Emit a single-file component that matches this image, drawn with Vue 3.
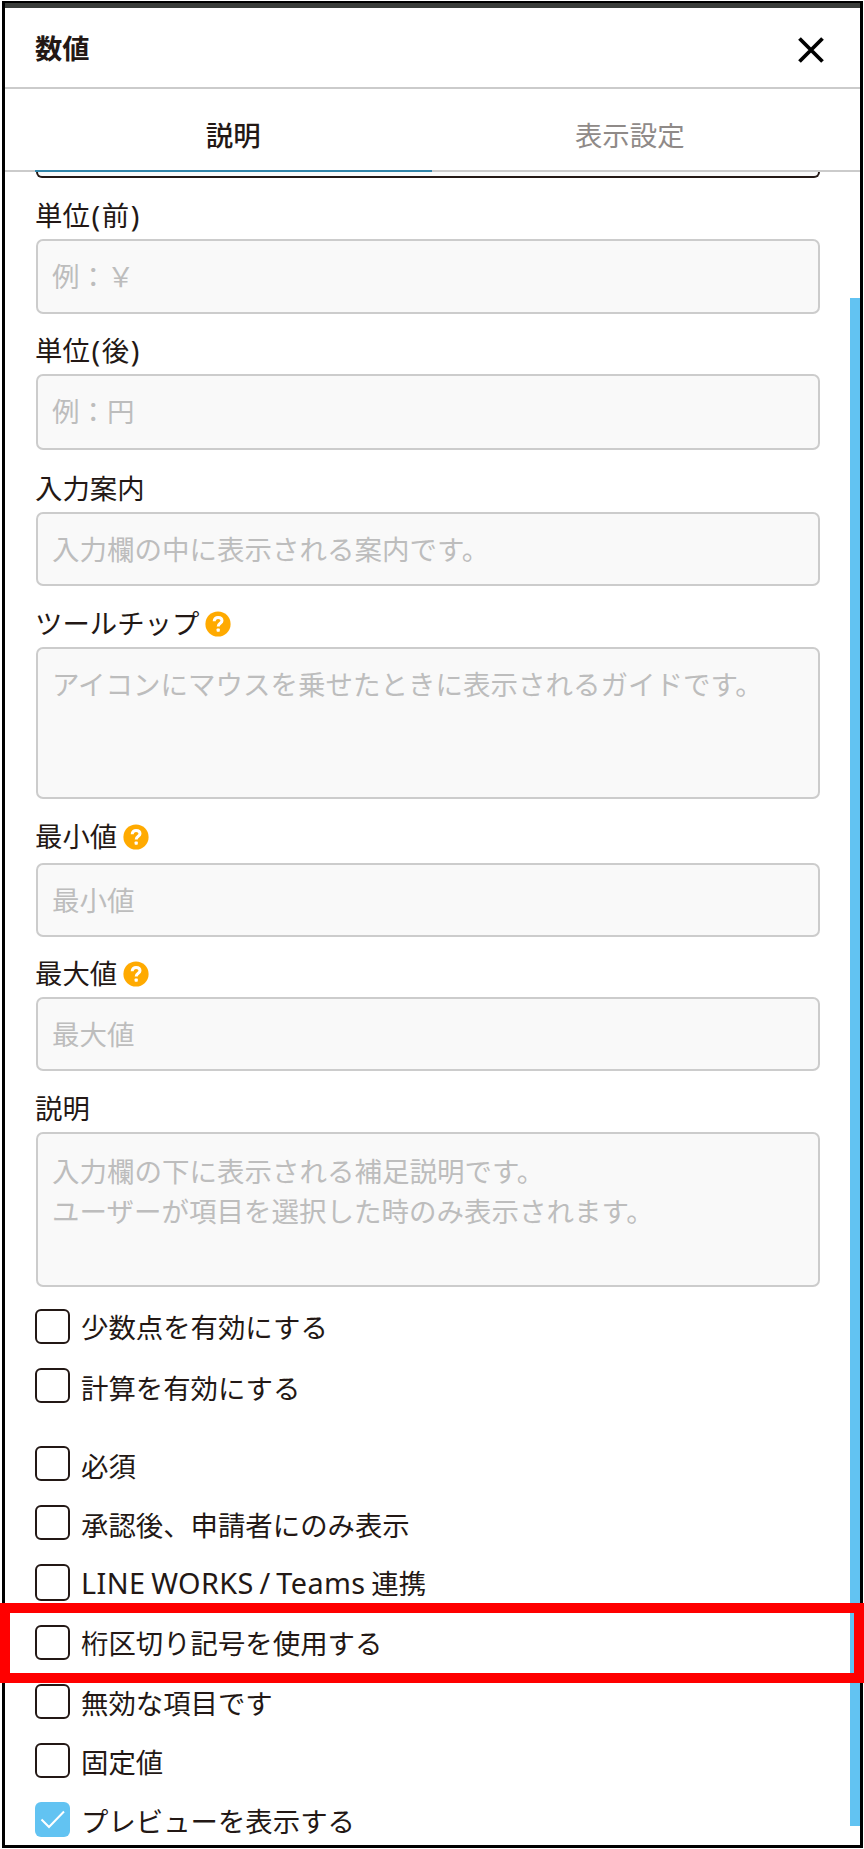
<script setup>
  import { ref } from "vue"

  const tabs = ['説明', '表示設定']
  const activeTab = ref(0)

  // gap: space above the label, height: height of the input box
  const fields = [
    {label: '単位(前)', placeholder: '例：￥', gap: 15, height: 75},
    {label: '単位(後)', placeholder: '例：円', gap: 14, height: 76, raised: true},
    {label: '入力案内', placeholder: '入力欄の中に表示される案内です。', gap: 16, height: 74},
    {label: 'ツールチップ', placeholder: 'アイコンにマウスを乗せたときに表示されるガイドです。', gap: 15, height: 152, multi: true, help: true},
    {label: '最小値', placeholder: '最小値', gap: 15, height: 74, help: true, loose: true},
    {label: '最大値', placeholder: '最大値', gap: 14, height: 74, help: true},
    {label: '説明', placeholder: '入力欄の下に表示される補足説明です。\nユーザーが項目を選択した時のみ表示されます。', gap: 15, height: 155, multi: true, low: true}
  ]

  const checks = ref([
    {label: '少数点を有効にする', on: false, gap: 22, drop: 1},
    {label: '計算を有効にする', on: false, gap: 24, drop: 3},
    {label: '必須', on: false, gap: 43, drop: 3},
    {label: '承認後、申請者にのみ表示', on: false, gap: 24, drop: 3},
    {label: 'LINE WORKS / Teams 連携', on: false, gap: 24, drop: 1, tall: true},
    {label: '桁区切り記号を使用する', on: false, gap: 24, drop: 1},
    {label: '無効な項目です', on: false, gap: 24, drop: 2},
    {label: '固定値', on: false, gap: 24, drop: 2},
    {label: 'プレビューを表示する', on: true, gap: 24, drop: 2}
  ])

  // latin runs and brackets are set a bit wider than the japanese text
  function parts(text) {
    return text.split(/([ -~]+)/).filter(Boolean).map(t => ({
      text: t,
      type: /^[()]$/.test(t) ? 'bracket' : /^[ -~]+$/.test(t) ? 'latin' : ''
    }))
  }
</script>

<template>
  <div class="screen">
    <div class="panel">
      <header class="header">
        <h1 class="header__title">数値</h1>
        <svg class="header__close" viewBox="0 0 28 28">
          <path d="M2.5 2.5L25.5 25.5M25.5 2.5L2.5 25.5" />
        </svg>
      </header>

      <nav class="tabs">
        <div
          v-for="(tab, i) in tabs" :key="tab"
          class="tab" :class="{ 'tab--active': i === activeTab }"
          @click="activeTab = i"
          >
          {{ tab }}
        </div>
      </nav>

      <div class="body">
        <div class="cut"></div>

        <div
          v-for="field in fields" :key="field.label"
          class="field"
          :style="{ marginTop: field.gap + 'px' }"
          >
          <label class="field__label" :class="{ 'field__label--loose': field.loose }">
            <span v-for="(part, i) in parts(field.label)" :key="i" :class="part.type">{{ part.text }}</span>
            <svg v-if="field.help" class="help" viewBox="0 0 26 26">
              <circle cx="13" cy="13" r="12.6" />
              <path d="M9.2 10.2C9.2 7.8 10.9 6.6 13.1 6.6C15.4 6.6 17 7.8 17 9.8C17 12.3 13.2 12.3 13.2 15.4" />
              <rect x="11.6" y="17.5" width="3.2" height="3.2" rx="0.8" />
            </svg>
          </label>
          <textarea
            v-if="field.multi"
            class="field__input field__input--multi"
            :class="{ 'field__input--low': field.low }"
            :style="{ height: field.height + 'px' }"
            :placeholder="field.placeholder"
            ></textarea>
          <input
            v-else
            class="field__input"
            :class="{ 'field__input--raised': field.raised }"
            :style="{ height: field.height + 'px' }"
            :placeholder="field.placeholder"
            >
        </div>

        <div
          v-for="check in checks" :key="check.label"
          class="check"
          :style="{ marginTop: check.gap + 'px' }"
          @click="check.on = !check.on"
          >
          <span class="check__box" :class="{ 'check__box--on': check.on, 'check__box--tall': check.tall }">
            <svg v-if="check.on" class="check__mark" viewBox="0 0 35 35">
              <path d="M6.5 17.5L14 25L29 9.5" />
            </svg>
          </span>
          <span class="check__text" :style="{ paddingTop: check.drop + 'px' }">
            <span v-for="(part, i) in parts(check.label)" :key="i" :class="part.type">{{ part.text }}</span>
          </span>
        </div>

        <div class="scrollbar"></div>
      </div>
    </div>
    <div class="highlight"></div>
  </div>
</template>

<style>
  body {
    background-color: #FFFFFF;
  }
</style>

<style scoped>
  .screen, .screen * {
    box-sizing: border-box;
  }

  .screen {
    position: relative;
    width: 864px;
    height: 1849px;
    padding: 1px 1px 1px 2px;
    overflow: hidden;
    color: #231815;
    font-family: "Noto Sans", "Noto Sans CJK JP", sans-serif;
    font-size: 27.4px;
    line-height: 40px;
  }

  .panel {
    height: 1847px;
    border: 3px solid #000000;
    border-top-width: 2px;
    display: flex;
    flex-direction: column;
  }

  .header {
    flex: none;
    height: 86px;
    border-top: 5px solid #3A3D3A;
    border-bottom: 2px solid #CBCBCB;
    display: flex;
    align-items: center;
    justify-content: space-between;
    padding: 0 35px 0 30px;
  }

  .header__title {
    margin: 2px 0 0;
    font-size: 27.3px;
    font-weight: 700;
  }

  .header__close {
    width: 28px;
    height: 28px;
    margin-top: 4px;
    fill: none;
    stroke: #000000;
    stroke-width: 3.8;
  }

  .tabs {
    flex: none;
    height: 83px;
    border-bottom: 2px solid #CBCBCB;
    display: flex;
    padding: 0 32px 0 30px;
  }

  .tab {
    flex: 1;
    height: 83px;
    padding-top: 27px;
    text-align: center;
    color: #8F8A88;
    cursor: pointer;
  }

  .tab--active {
    color: #231815;
    font-weight: 500;
    border-bottom: 2px solid #3184A8;
  }

  .body {
    position: relative;
    flex: 1;
    padding: 0 40px 0 31px;
    overflow: hidden;
  }

  /* lower edge of the input that is scrolled under the tabs */
  .cut {
    height: 6px;
    background: #FAFAFA;
    border: 2px solid #231815;
    border-top: 0;
    border-radius: 0 0 7px 7px;
  }

  .latin {
    font-size: 28.8px;
    letter-spacing: 0.4px;
    word-spacing: -2.1px;
    white-space: pre;
  }

  .bracket {
    font-size: 28.8px;
    padding: 0 1.6px;
  }

  .field__label {
    display: flex;
    align-items: center;
    height: 46px;
    margin-left: -1px;
  }

  .field__label--loose {
    height: 49px;
    padding-bottom: 3px;
  }

  .help {
    width: 26px;
    height: 26px;
    margin-left: 5.5px;
    fill: #FFAA00;
  }

  .help path {
    fill: none;
    stroke: #FFFFFF;
    stroke-width: 3;
  }

  .help rect {
    fill: #FFFFFF;
  }

  .field__input {
    display: block;
    width: 100%;
    margin: 0;
    padding: 0 15px 0 14px;
    background: #F9F9F9;
    border: 2px solid #CCCCCC;
    border-radius: 7px;
    font: inherit;
    font-size: 27.5px;
    outline: none;
    resize: none;
    overflow: hidden;
  }

  .field__input::placeholder {
    color: #BDBDBD;
    opacity: 1;
  }

  .field__input--raised {
    padding-bottom: 2px;
  }

  .field__input--multi {
    padding-top: 16px;
    line-height: 39.5px;
  }

  .field__input--low {
    padding-top: 18px;
  }

  .check {
    display: flex;
    align-items: flex-start;
    margin-left: -1px;
    cursor: pointer;
  }

  .check__box {
    flex: none;
    width: 35px;
    height: 35px;
    border: 2px solid #231815;
    border-radius: 6px;
  }

  .check__box--tall {
    height: 37px;
  }

  .check__box--on {
    background: #62C3F2;
    border: 0;
  }

  .check__mark {
    display: block;
    width: 35px;
    height: 35px;
    fill: none;
    stroke: #FFFFFF;
    stroke-width: 2;
  }

  .check__text {
    height: 35px;
    margin-left: 11px;
    line-height: 35px;
    white-space: nowrap;
  }

  .scrollbar {
    position: absolute;
    top: 126px;
    right: 0;
    width: 10px;
    height: 1528px;
    background: #62C3F2;
  }

  .highlight {
    position: absolute;
    left: 0;
    top: 1603px;
    width: 864px;
    height: 80px;
    border: 10px solid #FF0000;
  }
</style>
